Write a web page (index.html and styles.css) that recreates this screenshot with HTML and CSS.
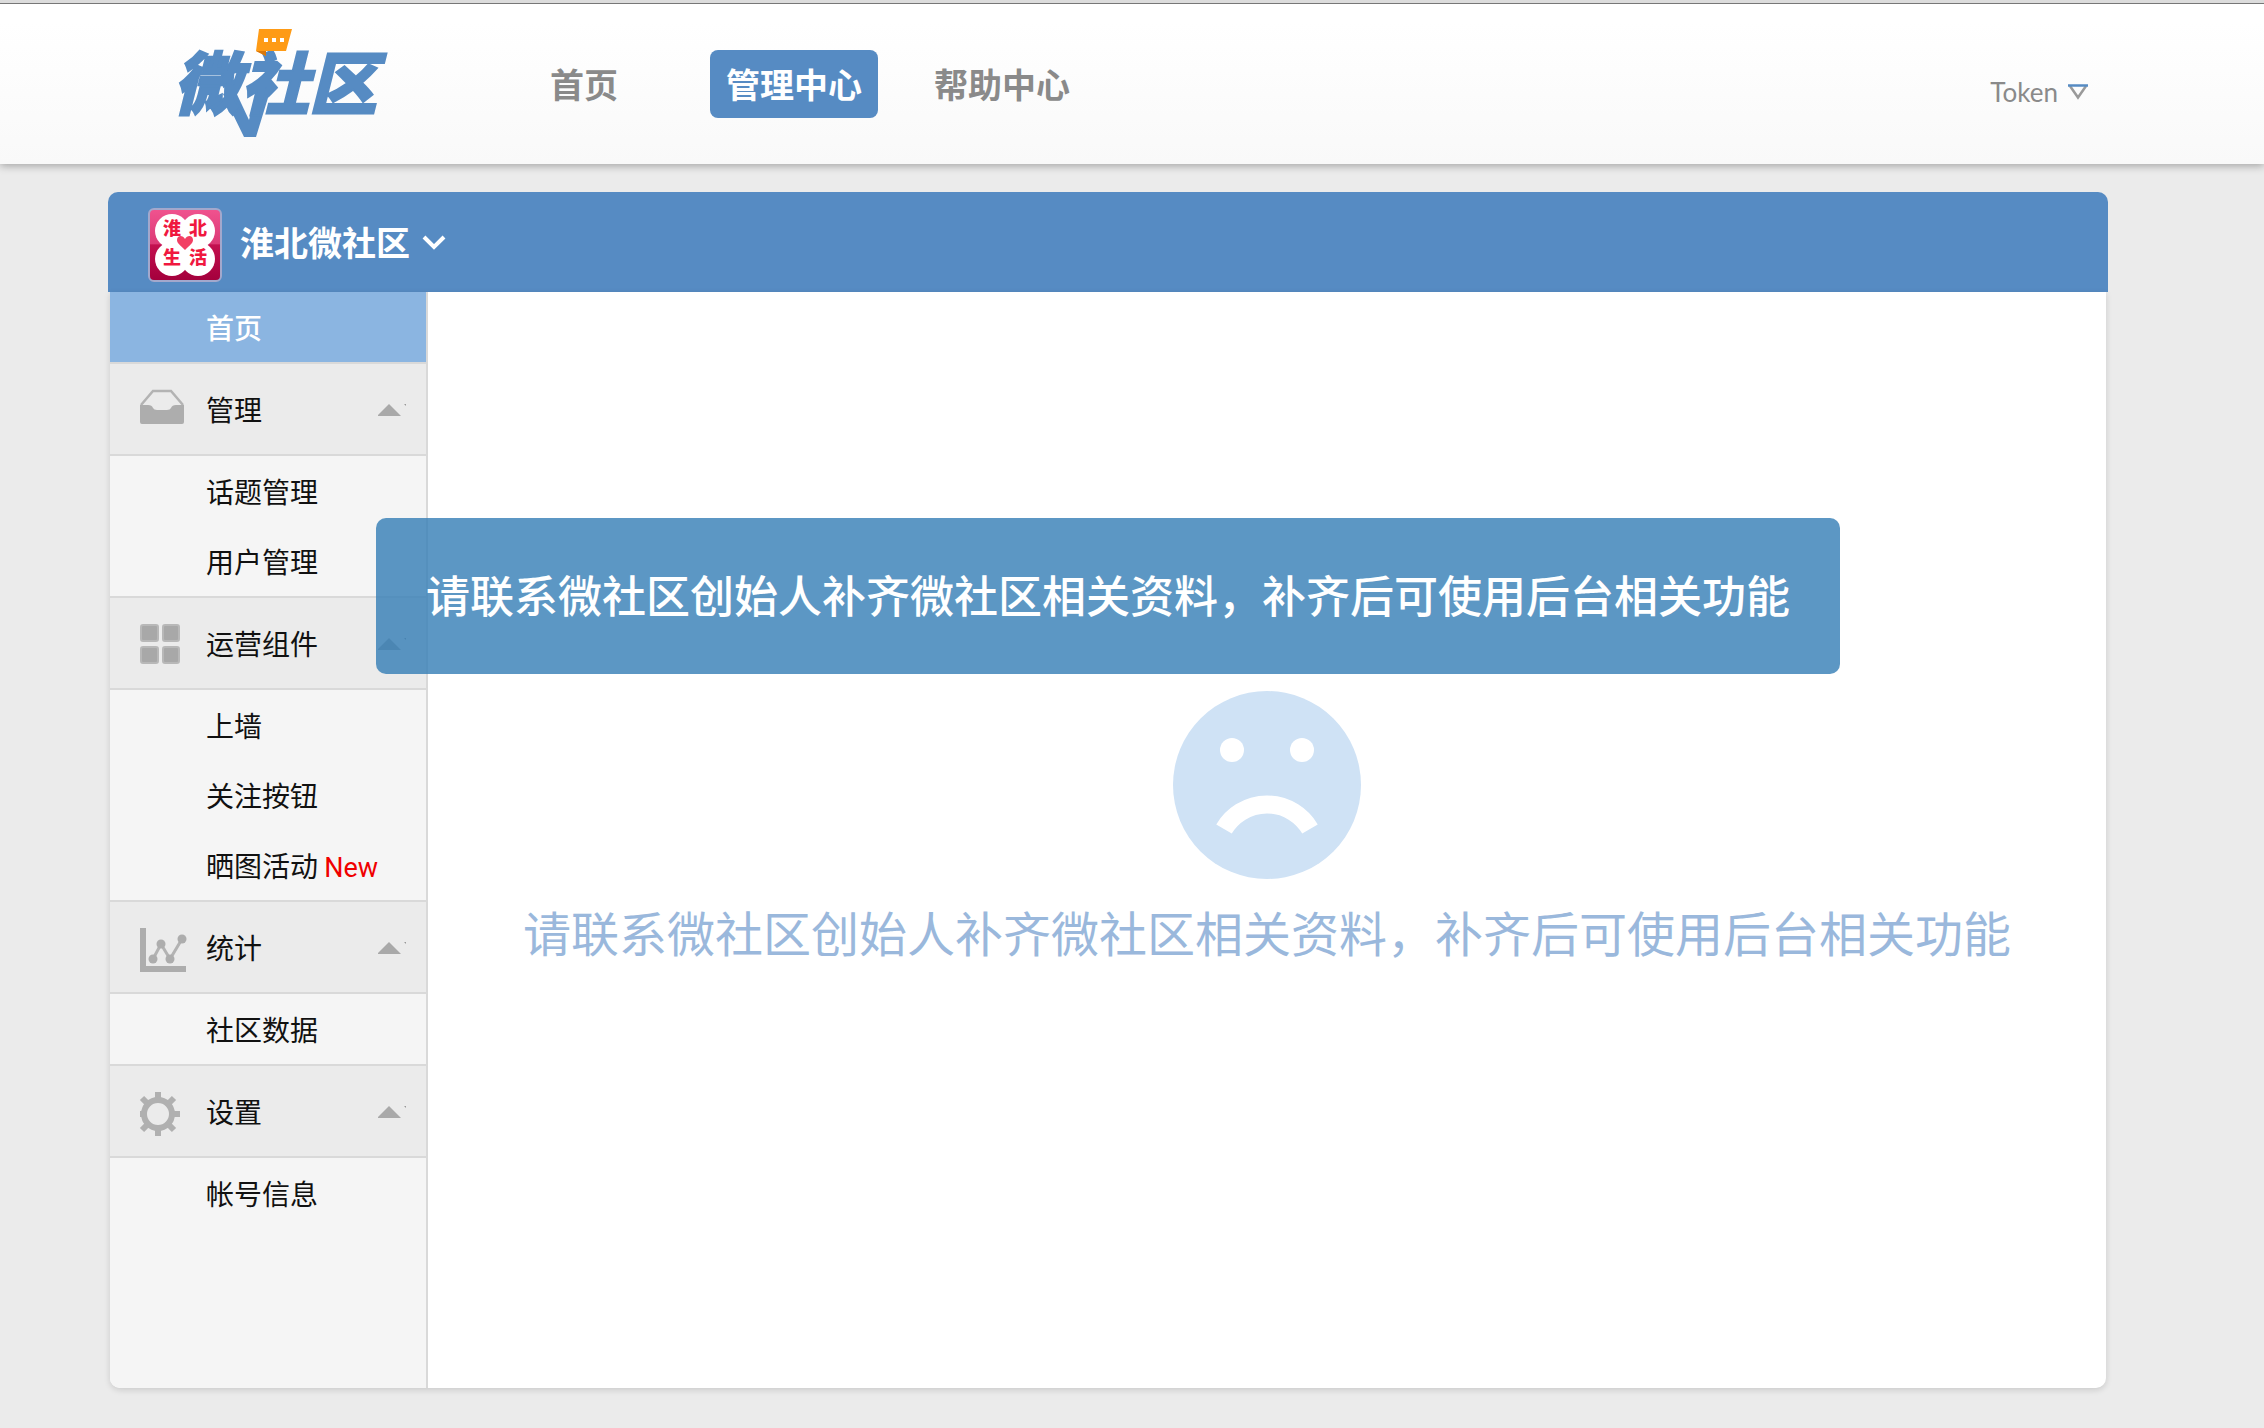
FILE: index.html
```html
<!DOCTYPE html>
<html lang="zh-CN">
<head>
<meta charset="utf-8">
<meta name="viewport" content="width=device-width, initial-scale=1">
<title>微社区 管理中心</title>
<link rel="stylesheet" href="styles.css">
</head>
<body>
<header class="topbar">
  <a class="logo" href="#" aria-label="微社区">
    <svg width="216" height="120" viewBox="0 0 216 120">
      <path d="M49 70 L60 64 L75 96 L84 60 L92 60 L97 64 L82 113 H70 Z" fill="#568bc3"/>
      <text class="logo-text" x="-1" y="85">微社区</text>
      <path d="M85 5 H118 L112 27 H92 V32 L82 27 Z" fill="#fe9b16"/>
      <path d="M82 27 H92 V32 Z" fill="#d9780b"/>
      <path d="M90 14h4v4h-4zM98 14h4v4h-4zM106 14h4v4h-4z" fill="#fff"/>
    </svg>
  </a>
  <nav class="nav">
    <a href="#">首页</a>
    <a href="#" class="current">管理中心</a>
    <a href="#">帮助中心</a>
  </nav>
  <button class="account" type="button">Token
    <svg width="20" height="16" viewBox="0 0 20 16"><path d="M2 2 L10 13.500 L18 2" fill="none" stroke="#9a9a9a" stroke-width="2.500"/><path d="M0 1.500H20" stroke="#568bc3" stroke-width="2.500"/></svg>
  </button>
</header>

<main class="panel">
  <div class="panel-head">
    <svg class="avatar" width="74" height="74" viewBox="0 0 74 74">
      <defs><linearGradient id="pink" x1="0" y1="0" x2="0" y2="1"><stop offset="0" stop-color="#f0538f"/><stop offset=".48" stop-color="#dc3a76"/><stop offset=".5" stop-color="#c3104f"/><stop offset="1" stop-color="#a3003c"/></linearGradient></defs>
      <rect x="1" y="1" width="72" height="72" rx="5" fill="url(#pink)" stroke="#a3a8cc" stroke-width="2"/>
      <g fill="#fff"><circle cx="24" cy="23" r="17"/><circle cx="50" cy="23" r="17"/><circle cx="24" cy="51" r="17"/><circle cx="50" cy="51" r="17"/><path d="M24 23H50V51H24z"/></g>
      <path d="M37 42 C32 37 29 35 29 32 C29 27 35 27 37 31 C39 27 45 27 45 32 C45 35 42 37 37 42Z" fill="#f23f63"/>
      <g class="avatar-text"><text x="15" y="27">淮</text><text x="41" y="27">北</text><text x="15" y="56">生</text><text x="41" y="56">活</text></g>
    </svg>
    <button class="switcher" type="button">淮北微社区
      <svg width="24" height="16" viewBox="0 0 24 16"><path d="M2 3 L12 13 L22 3" fill="none" stroke="#fff" stroke-width="4"/></svg>
    </button>
  </div>

  <div class="panel-body">
    <nav class="sidebar">
      <a class="item active" href="#">首页</a>

      <button class="group" type="button">
        <svg class="icon" width="48" height="48" viewBox="0 0 48 48"><path d="M1 20 L13 6 H31 L43 20" fill="none" stroke="#b3b3b3" stroke-width="2.500"/><path d="M0 20H8Q12 20 13 23Q14 25 17 25H27Q30 25 31 23Q32 20 36 20H44V37Q44 39 42 39H2Q0 39 0 37Z" fill="#adadad"/></svg>
        管理
        <svg class="arrow" width="28" height="14" viewBox="0 0 28 14"><path d="M0 13 L11 2 L23 14 H0Z" fill="#a9a9a9"/><path d="M26 2h2v2z" fill="#999"/></svg>
      </button>
      <a class="item" href="#">话题管理</a>
      <a class="item" href="#">用户管理</a>

      <button class="group" type="button">
        <svg class="icon" width="48" height="48" viewBox="0 0 48 48"><g fill="#a8a8a8" stroke="#b8b8b8" stroke-width="2"><rect x="1" y="6" width="17" height="16" rx="2"/><rect x="23" y="6" width="16" height="16" rx="2"/><rect x="1" y="28" width="17" height="16" rx="2"/><rect x="23" y="28" width="16" height="16" rx="2"/></g></svg>
        运营组件
        <svg class="arrow" width="28" height="14" viewBox="0 0 28 14"><path d="M0 13 L11 2 L23 14 H0Z" fill="#a9a9a9"/><path d="M26 2h2v2z" fill="#999"/></svg>
      </button>
      <a class="item" href="#">上墙</a>
      <a class="item" href="#">关注按钮</a>
      <a class="item" href="#">晒图活动 <span class="new">New</span></a>

      <button class="group" type="button">
        <svg class="icon" width="48" height="48" viewBox="0 0 48 48"><path d="M3 5V46M0 46H46" fill="none" stroke="#adadad" stroke-width="6"/><path d="M13 36 L21 21 L30 36 L42 16" fill="none" stroke="#b3b3b3" stroke-width="3"/><g fill="#adadad"><circle cx="13" cy="36" r="4.500"/><circle cx="21" cy="21" r="4.500"/><circle cx="30" cy="36" r="4.500"/><circle cx="42" cy="16" r="4.500"/></g></svg>
        统计
        <svg class="arrow" width="28" height="14" viewBox="0 0 28 14"><path d="M0 13 L11 2 L23 14 H0Z" fill="#a9a9a9"/><path d="M26 2h2v2z" fill="#999"/></svg>
      </button>
      <a class="item" href="#">社区数据</a>

      <button class="group" type="button">
        <svg class="icon" width="48" height="48" viewBox="0 0 48 48"><g fill="none" stroke="#b0b0b0"><circle cx="18" cy="27" r="14" stroke-width="6"/><path d="M18 5V12M18 42V49M0 27H3M33 27H40M2 11L7 16M29 38L34 43M2 43L7 38M29 16L34 11" stroke-width="6"/></g></svg>
        设置
        <svg class="arrow" width="28" height="14" viewBox="0 0 28 14"><path d="M0 13 L11 2 L23 14 H0Z" fill="#a9a9a9"/><path d="M26 2h2v2z" fill="#999"/></svg>
      </button>
      <a class="item" href="#">帐号信息</a>
    </nav>

    <section class="content">
      <svg width="188" height="188" viewBox="0 0 188 188"><circle cx="94" cy="94" r="94" fill="#cfe2f5"/><circle cx="59" cy="59" r="12" fill="#fff"/><circle cx="129" cy="59" r="12" fill="#fff"/><path d="M51 138 A50 50 0 0 1 137 138" fill="none" stroke="#fff" stroke-width="18"/></svg>
      <p class="empty-text">请联系微社区创始人补齐微社区相关资料，补齐后可使用后台相关功能</p>
    </section>
  </div>

  <div class="toast" role="alert">请联系微社区创始人补齐微社区相关资料，补齐后可使用后台相关功能</div>
</main>
</body>
</html>
```
FILE: styles.css
```css
* { box-sizing: border-box; }
body {
  margin: 0;
  min-height: 100vh;
  background: #ebebeb;
  font-family: "Noto Sans CJK SC", sans-serif;
  color: #111;
}
a { color: inherit; text-decoration: none; }
button { border: 0; background: none; padding: 0; font: inherit; color: inherit; cursor: pointer; }
svg { display: block; flex: none; overflow: visible; }

.topbar {
  display: flex;
  align-items: center;
  height: 164px;
  padding: 0 176px 0 174px;
  border-top: 3px solid #dcdcdc;
  background: linear-gradient(#777 1px, #fff 1px, #fff 20px, #f9f9f9);
  box-shadow: 0 2px 8px rgba(0, 0, 0, .3);
}
.logo-text {
  font-size: 68px;
  font-weight: 900;
  font-style: italic;
  fill: #568bc3;
  stroke: #568bc3;
  stroke-width: 2px;
}
.nav {
  display: flex;
  gap: 40px;
  margin-left: 144px;
  font-size: 34px;
  font-weight: 700;
  line-height: 68px;
  color: #8a8a8a;
}
.nav a { padding: 0 16px; border-radius: 8px; }
.nav a:first-child { margin-right: 36px; }
.nav .current { background: #568bc3; color: #fff; }
.account {
  display: flex;
  align-items: center;
  gap: 10px;
  margin-left: auto;
  padding-top: 16px;
  font-family: Lato, sans-serif;
  font-size: 26px;
  color: #8a8a8a;
}

.panel { position: relative; margin: 28px 156px 40px 108px; }
.panel-head {
  display: flex;
  align-items: center;
  height: 100px;
  padding: 6px 40px 0;
  border-radius: 10px 10px 0 0;
  background: #568bc3;
}
.avatar-text { font-size: 18px; font-weight: 900; fill: #f0183f; }
.switcher {
  display: flex;
  align-items: center;
  gap: 12px;
  margin-left: 18px;
  padding-bottom: 6px;
  font-size: 34px;
  font-weight: 700;
  line-height: 50px;
  color: #fff;
}
.panel-body {
  display: flex;
  min-height: 1096px;
  margin: 0 2px;
  border-radius: 0 0 10px 10px;
  background: #fff;
  box-shadow: 0 2px 6px rgba(0, 0, 0, .14);
}
.sidebar {
  flex: none;
  width: 318px;
  border-right: 2px solid #d9d9d9;
  border-radius: 0 0 0 10px;
  background: #f5f5f5;
  font-size: 28px;
}
.item { display: block; height: 70px; padding-left: 96px; line-height: 70px; }
.active { background: #8bb5e1; color: #fff; font-weight: 500; }
.new { font-family: Roboto, sans-serif; font-size: 27px; line-height: 1; color: #f00000; }
.group {
  display: flex;
  align-items: center;
  width: 100%;
  height: 94px;
  padding: 0 20px 0 30px;
  border-top: 2px solid #d9d9d9;
  border-bottom: 2px solid #d9d9d9;
  background: #ebebeb;
}
.icon { margin-right: 18px; }
.arrow { margin-left: auto; }

.content {
  flex: 1;
  display: flex;
  flex-direction: column;
  align-items: center;
  padding-top: 399px;
}
.empty-text { margin: 16px 0 0; font-size: 48px; line-height: 72px; color: #9ab8dc; }
.toast {
  position: absolute;
  top: 326px;
  left: 50%;
  transform: translateX(-50%);
  padding: 40px 50px 44px;
  border-radius: 10px;
  background: rgba(51, 125, 181, .8);
  color: #fff;
  font-size: 44px;
  font-weight: 500;
  line-height: 72px;
  white-space: nowrap;
}
```
